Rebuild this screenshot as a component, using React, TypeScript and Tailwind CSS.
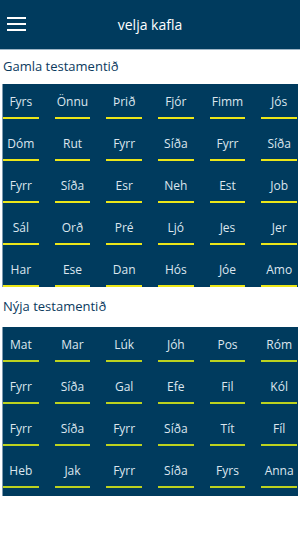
const OLD = [
  'Fyrs', 'Önnu', 'Þrið', 'Fjór', 'Fimm', 'Jós',
  'Dóm', 'Rut', 'Fyrr', 'Síða', 'Fyrr', 'Síða',
  'Fyrr', 'Síða', 'Esr', 'Neh', 'Est', 'Job',
  'Sál', 'Orð', 'Pré', 'Ljó', 'Jes', 'Jer',
  'Har', 'Ese', 'Dan', 'Hós', 'Jóe', 'Amo',
]

const NEW = [
  'Mat', 'Mar', 'Lúk', 'Jóh', 'Pos', 'Róm',
  'Fyrr', 'Síða', 'Gal', 'Efe', 'Fil', 'Kól',
  'Fyrr', 'Síða', 'Fyrr', 'Síða', 'Tít', 'Fíl',
  'Heb', 'Jak', 'Fyrr', 'Síða', 'Fyrs', 'Anna',
]

function BookGrid({ books, line, bottom }: { books: string[]; line: string; bottom: string }) {
  return (
    <div className={`mx-[2px] grid grid-cols-6 gap-x-4 gap-y-[7px] border-l border-[#7f9bb0] bg-[#003b5e] pr-[1px] ${bottom}`}>
      {books.map((b, i) => (
        <button
          key={i}
          className={`flex h-[35px] items-start justify-center border-b-2 pt-[9px] text-[12px] leading-[17px] text-[#dde6ee] ${line}`}
        >
          {b}
        </button>
      ))}
    </div>
  )
}

export default function App() {
  return (
    <div className="min-h-[533px] w-[300px] bg-white font-['Open_Sans',sans-serif]">
      <header className="relative flex h-[50px] items-center justify-center border-b border-[#9fb6c6] bg-[#003b5e]">
        <div className="absolute left-[7px] top-[17px] flex w-[19px] flex-col gap-[4px]">
          <span className="h-[2px] bg-white" />
          <span className="h-[2px] bg-white" />
          <span className="h-[2px] bg-white" />
        </div>
        <h1 className="text-[14px] text-white">velja kafla</h1>
      </header>

      <div className="flex h-[34px] items-center px-[3px] text-[13px] text-[#0b3a5e]">Gamla testamentið</div>
      <BookGrid books={OLD} line="border-[#ece619]" bottom="pb-0" />

      <div className="flex h-[40px] items-center px-[3px] text-[13px] text-[#0b3a5e]">Nýja testamentið</div>
      <BookGrid books={NEW} line="border-[#bcd21f]" bottom="pb-[8px]" />
    </div>
  )
}
